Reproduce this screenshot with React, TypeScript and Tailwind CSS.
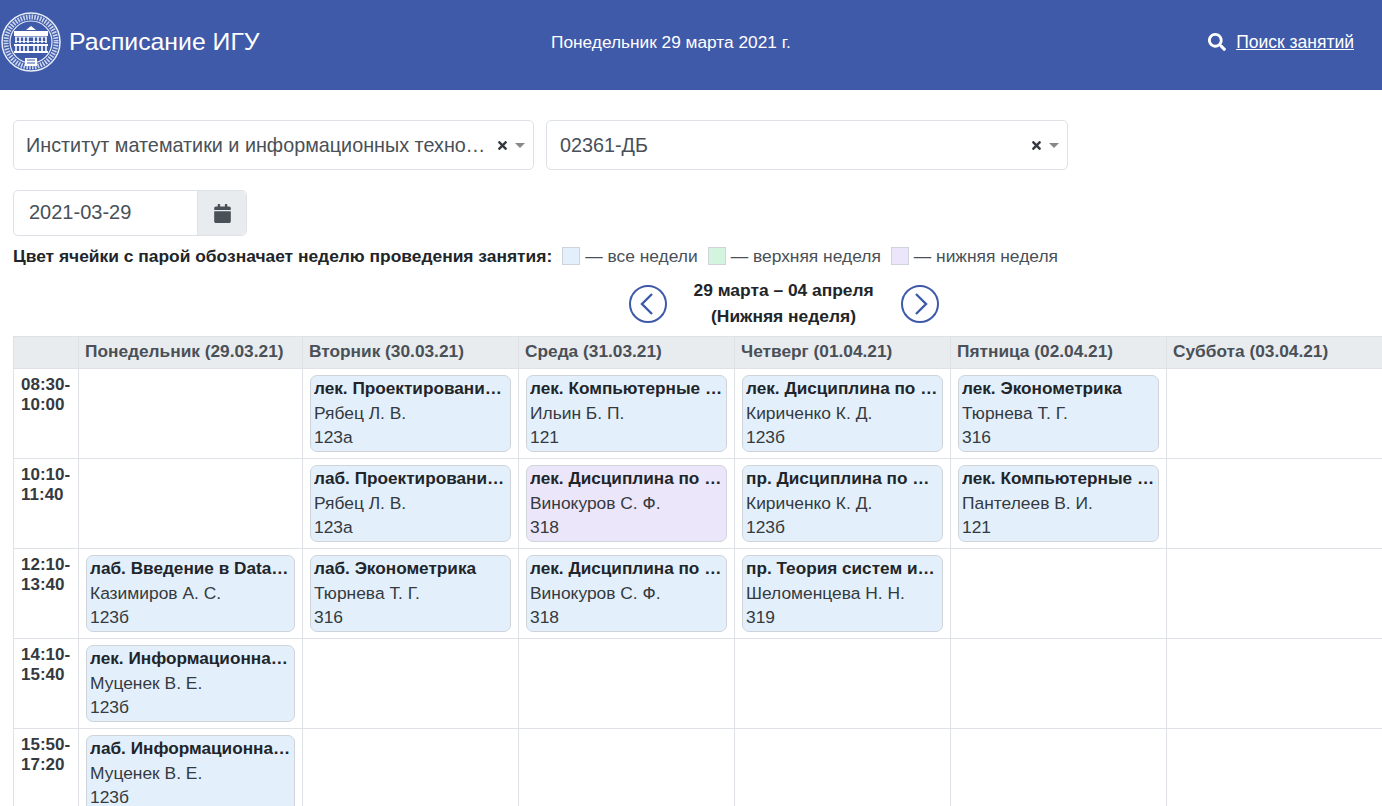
import { FaCalendar, FaSearch, FaTimes } from "react-icons/fa";

type Lesson = { title: string; teacher: string; room: string; lower?: boolean };

const days = [
  "Понедельник (29.03.21)",
  "Вторник (30.03.21)",
  "Среда (31.03.21)",
  "Четверг (01.04.21)",
  "Пятница (02.04.21)",
  "Суббота (03.04.21)",
];

const rows: { time: string[]; cells: (Lesson | null)[] }[] = [
  {
    time: ["08:30-", "10:00"],
    cells: [
      null,
      { title: "лек. Проектирование информационных систем", teacher: "Рябец Л. В.", room: "123а" },
      { title: "лек. Компьютерные сети", teacher: "Ильин Б. П.", room: "121" },
      { title: "лек. Дисциплина по выбору", teacher: "Кириченко К. Д.", room: "123б" },
      { title: "лек. Эконометрика", teacher: "Тюрнева Т. Г.", room: "316" },
      null,
    ],
  },
  {
    time: ["10:10-", "11:40"],
    cells: [
      null,
      { title: "лаб. Проектирование информационных систем", teacher: "Рябец Л. В.", room: "123а" },
      { title: "лек. Дисциплина по выбору", teacher: "Винокуров С. Ф.", room: "318", lower: true },
      { title: "пр. Дисциплина по выбору", teacher: "Кириченко К. Д.", room: "123б" },
      { title: "лек. Компьютерные сети", teacher: "Пантелеев В. И.", room: "121" },
      null,
    ],
  },
  {
    time: ["12:10-", "13:40"],
    cells: [
      { title: "лаб. Введение в Data Science", teacher: "Казимиров А. С.", room: "123б" },
      { title: "лаб. Эконометрика", teacher: "Тюрнева Т. Г.", room: "316" },
      { title: "лек. Дисциплина по выбору", teacher: "Винокуров С. Ф.", room: "318" },
      { title: "пр. Теория систем и системный анализ", teacher: "Шеломенцева Н. Н.", room: "319" },
      null,
      null,
    ],
  },
  {
    time: ["14:10-", "15:40"],
    cells: [
      { title: "лек. Информационная безопасность", teacher: "Муценек В. Е.", room: "123б" },
      null,
      null,
      null,
      null,
      null,
    ],
  },
  {
    time: ["15:50-", "17:20"],
    cells: [
      { title: "лаб. Информационная безопасность", teacher: "Муценек В. Е.", room: "123б" },
      null,
      null,
      null,
      null,
      null,
    ],
  },
];

function Logo() {
  return (
    <svg viewBox="0 0 60 60" className="h-[60px] w-[60px] shrink-0" fill="none">
      <circle cx="30" cy="30" r="29" stroke="#e8eefa" strokeWidth="1.5" />
      <circle cx="30" cy="30" r="21" stroke="#e8eefa" strokeWidth="1.2" />
      <circle cx="30" cy="30" r="25" stroke="#c9d5ef" strokeWidth="5" strokeDasharray="1.6 1.2" />
      <path d="M30 14l5 4h-10z" fill="#fff" />
      <rect x="13" y="19" width="34" height="5" fill="#fff" />
      <path d="M14 25h32M14 29.500h32" stroke="#dfe7f7" strokeWidth="1" />
      <path d="M15 31V25M19 31V25M23 31V25M27 31V25M33 31V25M37 31V25M41 31V25M45 31V25" stroke="#fff" strokeWidth="1.6" />
      <rect x="13" y="32" width="34" height="2" fill="#fff" />
      <path d="M15 39v-5M19 39v-5M23 39v-5M27 39v-5M33 39v-5M37 39v-5M41 39v-5M45 39v-5" stroke="#fff" strokeWidth="1.6" />
      <rect x="13" y="39" width="34" height="2" fill="#fff" />
      <rect x="24" y="46" width="12" height="8" fill="#fff" />
      <path d="M26 48h8M26 51h8" stroke="#3f5aa9" strokeWidth="1" />
    </svg>
  );
}

function ClearAndCaret() {
  return (
    <div className="flex items-center">
      <FaTimes className="h-[13px] w-[13px] text-[#343a40]" />
      <span className="ml-[6px] h-0 w-0 border-x-[5px] border-t-[5px] border-x-transparent border-t-[#888]" />
    </div>
  );
}

function ArrowButton({ dir }: { dir: "left" | "right" }) {
  return (
    <svg viewBox="0 0 40 40" className="h-[40px] w-[40px]" fill="none" stroke="#3f5aa9">
      <circle cx="20" cy="20" r="18" strokeWidth="2" />
      <path d={dir === "left" ? "M24 10 L14 20 L24 30" : "M16 10 L26 20 L16 30"} strokeWidth="2.400" />
    </svg>
  );
}

function LegendItem({ color, label }: { color: string; label: string }) {
  return (
    <div className="ml-[10px] flex items-center">
      <span className={`h-[18px] w-[18px] border border-[#ced4da] ${color}`} />
      <span className="ml-[5px] text-[#495057]">— {label}</span>
    </div>
  );
}

function LessonCard({ lesson }: { lesson: Lesson }) {
  return (
    <div
      className={`h-[77px] w-full rounded-[7px] border border-[#ced4da] px-[3px] text-[17.400px] leading-[24.500px] ${
        lesson.lower ? "bg-[#ece6fb]" : "bg-[#e3f0fc]"
      }`}
    >
      <div className="truncate text-[17.200px] font-bold text-[#212529]">{lesson.title}</div>
      <div className="truncate text-[#343a40]">{lesson.teacher}</div>
      <div className="truncate text-[#343a40]">{lesson.room}</div>
    </div>
  );
}

export default function App() {
  return (
    <div className="h-[806px] w-[1382px] overflow-hidden bg-white font-['Liberation_Sans',Arial,sans-serif] text-[#212529]">
      <header className="flex h-[90px] items-center bg-[#3f5aa9] pb-[6px] text-white">
        <div className="flex w-[530px] items-center pl-[1px]">
          <Logo />
          <span className="ml-[8px] text-[24.800px]">Расписание ИГУ</span>
        </div>
        <div className="ml-[21px] mt-[2px] text-[17.300px]">Понедельник 29 марта 2021 г.</div>
        <div className="ml-auto flex items-center pr-[28px] text-[17.500px]">
          <FaSearch className="h-[18px] w-[18px]" />
          <span className="ml-[10px] underline">Поиск занятий</span>
        </div>
      </header>

      <div className="pl-[13px] pt-[30px]">
        <div className="flex gap-[12px]">
          <div className="flex h-[50px] w-[521px] items-center justify-between rounded-[5px] border border-[#dee2e6] pl-[12px] pr-[8px] pt-[1px] text-[19.800px] text-[#495057]">
            <span className="truncate">Институт математики и информационных технологий</span>
            <div className="ml-[9px] shrink-0">
              <ClearAndCaret />
            </div>
          </div>
          <div className="flex h-[50px] w-[522px] items-center justify-between rounded-[5px] border border-[#dee2e6] pl-[13px] pr-[8px] pt-[1px] text-[19.800px] text-[#495057]">
            <span>02361-ДБ</span>
            <ClearAndCaret />
          </div>
        </div>

        <div className="mt-[20px] flex h-[46px] w-[234px] rounded-[5px] border border-[#dee2e6] text-[20px] text-[#495057]">
          <div className="flex w-[183px] items-center pb-[3px] pl-[15px]">2021-03-29</div>
          <div className="flex flex-1 items-center justify-center rounded-r-[5px] border-l border-[#dee2e6] bg-[#e9ecef]">
            <FaCalendar className="h-[19px] w-[17px] text-[#495057]" />
          </div>
        </div>

        <div className="mt-[8px] flex h-[24px] items-center text-[17.400px]">
          <span className="font-bold">Цвет ячейки с парой обозначает неделю проведения занятия:</span>
          <LegendItem color="bg-[#e3f0fc]" label="все недели" />
          <LegendItem color="bg-[#d3f5e0]" label="верхняя неделя" />
          <LegendItem color="bg-[#ece6fb]" label="нижняя неделя" />
        </div>

        <div className="mb-[4px] mt-[8px] flex h-[56px] items-center justify-center pl-[172px]">
          <ArrowButton dir="left" />
          <div className="mx-[26px] -mt-[2px] w-[180px] whitespace-nowrap text-center text-[17.400px] font-bold leading-[26px]">
            <div>29 марта – 04 апреля</div>
            <div>(Нижняя неделя)</div>
          </div>
          <ArrowButton dir="right" />
        </div>

        <table className="w-[1369px] table-fixed border-collapse text-[17.300px]">
          <colgroup>
            <col className="w-[65px]" />
            <col className="w-[224px]" />
            <col className="w-[216px]" />
            <col className="w-[216px]" />
            <col className="w-[216px]" />
            <col className="w-[216px]" />
            <col className="w-[216px]" />
          </colgroup>
          <thead>
            <tr className="h-[32px] bg-[#e9ecef]">
              <th className="border border-[#dee2e6]" />
              {days.map((day) => (
                <th key={day} className="border border-[#dee2e6] px-[6px] pb-[2px] text-left font-bold text-[#495057]">
                  {day}
                </th>
              ))}
            </tr>
          </thead>
          <tbody>
            {rows.map((row) => (
              <tr key={row.time[0]} className="h-[90px]">
                <td className="border border-[#dee2e6] pl-[7px] pr-0 pt-[6px] align-top text-[17px] font-bold leading-[20px] text-[#343a40]">
                  {row.time.map((t) => (
                    <div key={t}>{t}</div>
                  ))}
                </td>
                {row.cells.map((cell, i) => (
                  <td key={i} className="border border-[#dee2e6] px-[7px] pt-[6px] align-top">
                    {cell ? <LessonCard lesson={cell} /> : null}
                  </td>
                ))}
              </tr>
            ))}
          </tbody>
        </table>
      </div>
    </div>
  );
}
